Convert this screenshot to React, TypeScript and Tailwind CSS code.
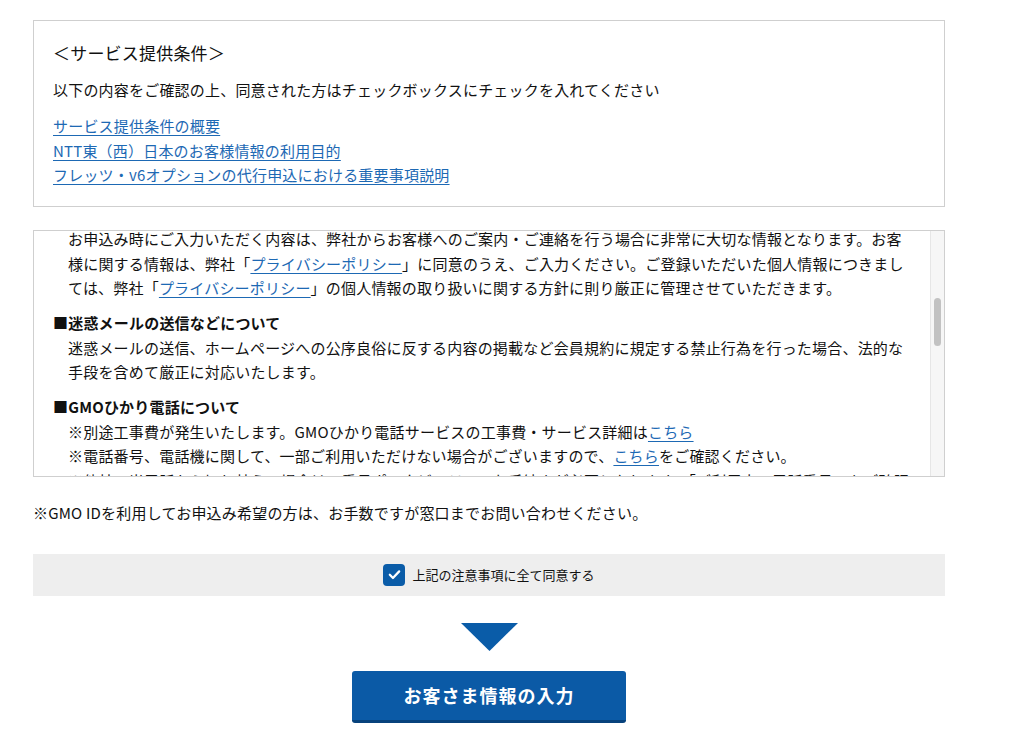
import { useEffect, useRef, useState } from 'react';

// ---------------------------------------------------------------------------
// Small pieces
// ---------------------------------------------------------------------------

function TextLink({ children }: { children: React.ReactNode }) {
  return (
    <a href="#" className="text-[#1d69b4] underline underline-offset-[3px] decoration-[1px]">
      {children}
    </a>
  );
}

function Section({ title, children }: { title: string; children: React.ReactNode }) {
  return (
    <div className="mb-[10.5px]">
      <p className="font-bold">■{title}</p>
      <div className="pl-[15px]">{children}</div>
    </div>
  );
}

// ---------------------------------------------------------------------------
// Component
// ---------------------------------------------------------------------------

const TRACK_HEIGHT = 245;

export default function App() {
  const boxRef = useRef<HTMLDivElement>(null);
  const anchorRef = useRef<HTMLParagraphElement>(null);
  const [thumb, setThumb] = useState({ top: 0, height: 40 });

  const syncThumb = () => {
    const el = boxRef.current;
    if (!el) return;
    const ratio = TRACK_HEIGHT / el.scrollHeight;
    setThumb({ top: el.scrollTop * ratio, height: el.clientHeight * ratio });
  };

  // the terms box is shown scrolled down to the privacy section
  useEffect(() => {
    if (boxRef.current && anchorRef.current) {
      boxRef.current.scrollTop = anchorRef.current.offsetTop + 3;
    }
    syncThumb();
  }, []);

  return (
    <div
      className="min-h-screen bg-white text-[#111] text-[15px] tracking-[0.2px]"
      style={{ fontFamily: '"Noto Sans CJK JP", "Noto Sans", sans-serif' }}
    >
      <div className="w-[912px] ml-[33px] pt-[20px] pb-[22px]">
        {/* Conditions */}
        <div className="border border-[#cfcfcf] px-[19px] pt-[19px] pb-[18px]">
          <p className="text-[17px] leading-[26px]">＜サービス提供条件＞</p>
          <p className="mt-[12px] leading-[24px]">
            以下の内容をご確認の上、同意された方はチェックボックスにチェックを入れてください
          </p>
          <ul className="mt-[12px] leading-[24.5px]">
            <li>
              <TextLink>サービス提供条件の概要</TextLink>
            </li>
            <li>
              <TextLink>NTT東（西）日本のお客様情報の利用目的</TextLink>
            </li>
            <li>
              <TextLink>フレッツ・v6オプションの代行申込における重要事項説明</TextLink>
            </li>
          </ul>
        </div>

        {/* Notes (scrollable) */}
        <div className="mt-[23px] flex h-[247px] border border-[#cfcfcf]">
          <div
            ref={boxRef}
            onScroll={syncThumb}
            className="relative flex-1 overflow-y-scroll pl-[19px] pr-[14px] pt-[12px] pb-[12px] leading-[24.5px] [scrollbar-width:none] [&::-webkit-scrollbar]:hidden"
          >
            <Section title="お申込みについて">
              <p>
                本サービスは、NTT東日本またはNTT西日本の「フレッツ光」回線をご利用中の方、もしくは新たにお申込みいただく方を対象としております。お申込み内容の確認のため、弊社よりご連絡させていただく場合がございます。
              </p>
              <p>※お申込み後の内容変更につきましては、サポート窓口までご連絡ください。</p>
            </Section>
            <Section title="料金について">
              <p>
                月額料金は、ご利用開始日の属する月の翌月から発生いたします。初期費用・工事費につきましては、初回のご請求時にあわせてご請求いたします。
              </p>
              <p>
                ※お支払い方法はクレジットカードのみとなります。ご本人様名義のカードをご用意ください。
              </p>
            </Section>
            <Section title="ご利用開始日について">
              <p>
                ご利用開始日は、NTT東日本またはNTT西日本の工事日程により決定いたします。お申込みの状況によっては、ご希望の日程でのご利用開始ができない場合がございます。あらかじめご了承ください。
              </p>
            </Section>
            <Section title="個人情報の取り扱いについて">
              <p ref={anchorRef}>
                お申込み時にご入力いただく内容は、弊社からお客様へのご案内・ご連絡を行う場合に非常に大切な情報となります。お客様に関する情報は、弊社「
                <TextLink>プライバシーポリシー</TextLink>
                」に同意のうえ、ご入力ください。ご登録いただいた個人情報につきましては、弊社「
                <TextLink>プライバシーポリシー</TextLink>
                」の個人情報の取り扱いに関する方針に則り厳正に管理させていただきます。
              </p>
            </Section>
            <Section title="迷惑メールの送信などについて">
              <p>
                迷惑メールの送信、ホームページへの公序良俗に反する内容の掲載など会員規約に規定する禁止行為を行った場合、法的な手段を含めて厳正に対応いたします。
              </p>
            </Section>
            <Section title="GMOひかり電話について">
              <p>
                ※別途工事費が発生いたします。GMOひかり電話サービスの工事費・サービス詳細は<TextLink>こちら</TextLink>
              </p>
              <p>
                ※電話番号、電話機に関して、一部ご利用いただけない場合がございますので、<TextLink>こちら</TextLink>をご確認ください。
              </p>
              <p>
                ※他社の光電話から切り替えの場合は、番号ポータビリティのお手続きが必要となります。「ご利用中の電話番号」をご確認のうえお申込みください。
              </p>
              <p>
                ※停電時にはご利用いただけません。また、110番・118番・119番以外の一部の特番にはおかけいただけない場合がございます。
              </p>
            </Section>
            <Section title="接続機器について">
              <p>
                ご利用には、IPv6（IPoE）接続に対応したルーターが必要です。お手持ちのルーターが対応していない場合は、弊社よりレンタルでご提供いたします。
              </p>
              <p>
                ※レンタル機器は解約時にご返却いただく必要がございます。返却されない場合、機器損害金を請求させていただきます。
              </p>
            </Section>
            <Section title="通信速度について">
              <p>
                記載の通信速度は技術規格上の最大値であり、実際の通信速度を保証するものではありません。お客様のご利用環境や回線の混雑状況などにより、通信速度が低下する場合がございます。
              </p>
            </Section>
            <Section title="サポートについて">
              <p>
                サポート窓口の受付時間は、平日10:00〜18:00（土日祝日・年末年始を除く）となります。お問い合わせの際は、会員IDをご用意ください。
              </p>
              <p>
                ※混雑状況により、お電話がつながりにくい場合がございます。メールでのお問い合わせもご利用ください。
              </p>
            </Section>
            <Section title="最低利用期間・解約について">
              <p>
                本サービスには最低利用期間がございます。最低利用期間内に解約された場合は、所定の解約違約金が発生いたします。
              </p>
              <p>
                解約をご希望の場合は、サポート窓口までご連絡ください。解約に伴い、NTT東日本またはNTT西日本への手続きが別途必要となる場合がございます。
              </p>
            </Section>
            <Section title="その他">
              <p>
                本サービスの内容・料金は予告なく変更となる場合がございます。最新の情報につきましては、弊社ホームページをご確認ください。
              </p>
              <p>
                その他の事項につきましては、会員規約およびサービス約款に準じます。ご不明な点がございましたら、サポート窓口までお問い合わせください。
              </p>
            </Section>
          </div>

          {/* scrollbar track */}
          <div className="relative w-[14px] shrink-0 border-l border-[#e6e6e6] bg-[#f6f6f6]">
            <div
              className="absolute left-[3px] w-[7px] rounded-full bg-[#c2c2c2]"
              style={{ top: thumb.top, height: thumb.height }}
            />
          </div>
        </div>

        {/* GMO ID note */}
        <p className="mt-[24px] leading-[24px]">
          ※GMO IDを利用してお申込み希望の方は、お手数ですが窓口までお問い合わせください。
        </p>

        {/* Agreement */}
        <label className="mt-[29px] flex h-[42px] items-center justify-center gap-[7px] bg-[#eeeeee] text-[13px] tracking-normal cursor-pointer">
          <span className="flex h-[22px] w-[22px] items-center justify-center rounded-[4px] bg-[#0a5ca8]">
            <svg viewBox="0 0 24 24" className="h-[15px] w-[15px]" fill="none" stroke="white" strokeWidth="3.6" strokeLinecap="round" strokeLinejoin="round">
              <path d="M4.5 12.5l5 5L19.5 7" />
            </svg>
          </span>
          上記の注意事項に全て同意する
        </label>

        {/* Arrow */}
        <div className="mt-[27px] flex justify-center">
          <svg viewBox="0 0 57 28" className="h-[28px] w-[57px]">
            <polygon points="0,0 57,0 28.5,28" fill="#0a5ca8" />
          </svg>
        </div>

        {/* Next */}
        <div className="mt-[20px] flex justify-center">
          <button
            type="button"
            className="h-[52px] w-[274px] rounded-[3px] border-b-[3px] border-[#07427c] bg-[#0b5aa6] text-[18px] font-bold text-white tracking-[1px]"
          >
            お客さま情報の入力
          </button>
        </div>
      </div>
    </div>
  );
}
